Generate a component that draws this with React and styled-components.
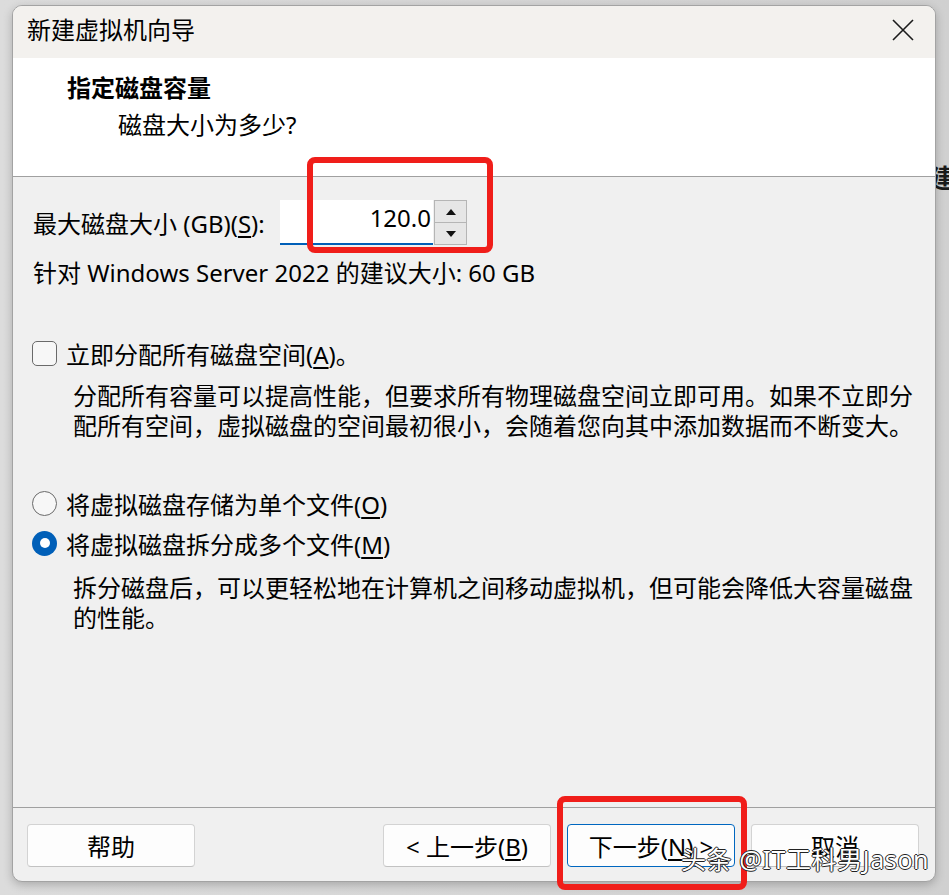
import React from 'react'
import styled, { createGlobalStyle } from 'styled-components'

const GlobalStyle = createGlobalStyle`
  body {
    margin: 0;
    background: #d2d2d2;
    font-family: "Segoe UI", "Noto Sans", "Noto Sans CJK SC", sans-serif;
    color: #000;
  }
`

const Page = styled.div`
  position: relative;
  width: 949px;
  height: 895px;
  overflow: hidden;
  box-sizing: border-box;
  padding: 5px 0 0 12px;
  background: linear-gradient(90deg, #dcdcdc 0%, #d0d0d0 100%);
`

const BackChar = styled.span`
  position: absolute;
  left: 929px;
  top: 158px;
  font-size: 26px;
  font-weight: 700;
  color: #1a1a1a;
  font-family: "Noto Sans CJK SC", sans-serif;
`

const Window = styled.div`
  position: relative;
  width: 924px;
  height: 877px;
  box-sizing: border-box;
  border: 1px solid #a3a3a3;
  border-radius: 10px;
  overflow: hidden;
  display: flex;
  flex-direction: column;
  background: #f0f0f0;
  box-shadow: 0 3px 10px rgba(0, 0, 0, 0.22);
`

const TitleBar = styled.div`
  height: 52px;
  flex: none;
  background: #f3f1ee;
  display: flex;
  align-items: center;
  justify-content: space-between;
  padding: 0 21px 4px 14px;
  box-sizing: border-box;
`

const Title = styled.span`
  font-size: 24px;
  line-height: 32px;
`

const Header = styled.div`
  height: 119px;
  flex: none;
  box-sizing: border-box;
  background: #fff;
  border-bottom: 1px solid #a0a0a0;
  padding: 14px 0 0 54px;
`

const Heading = styled.div`
  font-size: 24px;
  line-height: 32px;
  font-weight: 700;
`

const SubHeading = styled.div`
  font-size: 24px;
  line-height: 32px;
  margin: 5px 0 0 51px;
`

const Body = styled.div`
  flex: 1;
  padding: 23px 0 0 20px;
  font-size: 24px;
`

const SizeRow = styled.div`
  display: flex;
  align-items: center;
  height: 45px;
`

const SizeLabel = styled.span`
  width: 247px;
  flex: none;
  white-space: nowrap;
`

const SizeInput = styled.div`
  width: 153px;
  height: 45px;
  box-sizing: border-box;
  background: #fff;
  border-bottom: 2px solid #005fb8;
  display: flex;
  align-items: center;
  justify-content: flex-end;
  padding: 0 2px 8px 0;
  font-size: 24px;
`

const Spin = styled.div`
  margin-left: 1px;
  width: 33px;
  height: 45px;
  display: flex;
  flex-direction: column;
  border: 1px solid #b5b5b5;
  box-sizing: border-box;
`

const SpinButton = styled.div`
  flex: 1;
  background: #e6e6e6;
  display: flex;
  align-items: center;
  justify-content: center;
  & + & {
    border-top: 1px solid #b5b5b5;
  }
`

const Line = styled.div`
  line-height: 32px;
  margin-top: ${(p) => p.$top || 0}px;
`

const OptionRow = styled.label`
  display: flex;
  align-items: center;
  gap: 9px;
  height: 32px;
  margin: ${(p) => p.$top || 0}px 0 0 -1px;
`

const CheckBox = styled.span`
  width: 25px;
  height: 25px;
  box-sizing: border-box;
  border: 1.5px solid #6a6a6a;
  border-radius: 5px;
  background: #f7f7f7;
`

const Radio = styled.span`
  width: 25px;
  height: 25px;
  box-sizing: border-box;
  border-radius: 50%;
  display: flex;
  align-items: center;
  justify-content: center;
  background: ${(p) => (p.$checked ? '#005fb8' : '#f7f7f7')};
  border: ${(p) => (p.$checked ? 'none' : '1.5px solid #6a6a6a')};
  &::after {
    content: '';
    display: ${(p) => (p.$checked ? 'block' : 'none')};
    width: 10px;
    height: 10px;
    border-radius: 50%;
    background: #fff;
  }
`

const Description = styled.div`
  margin: ${(p) => p.$top}px 0 0 40px;
  line-height: 30px;
  white-space: nowrap;
`

const Key = styled.span`
  text-decoration: underline;
  text-underline-offset: 3px;
`

const Footer = styled.div`
  height: 74px;
  flex: none;
  box-sizing: border-box;
  border-top: 1px solid #a0a0a0;
  display: flex;
  gap: 16px;
  padding: 16px 16px 0 14px;
`

const Button = styled.button`
  width: 168px;
  height: 43px;
  box-sizing: border-box;
  background: #fdfdfd;
  border: 1px solid ${(p) => (p.$primary ? '#0067c0' : '#d3d3d3')};
  border-bottom-color: ${(p) => (p.$primary ? '#0067c0' : '#c2c2c2')};
  border-radius: 4px;
  font-family: inherit;
  font-size: 24px;
  color: #000;
  padding: 0;
  margin-left: ${(p) => (p.$push ? 'auto' : '0')};
`

const Mark = styled.div`
  position: absolute;
  left: ${(p) => p.$x}px;
  top: ${(p) => p.$y}px;
  width: ${(p) => p.$w}px;
  height: ${(p) => p.$h}px;
  box-sizing: border-box;
  border: 6px solid #f01e1a;
  border-radius: 8px;
`

const Watermark = styled.div`
  position: absolute;
  left: 681px;
  top: 843px;
  font-size: 25px;
  line-height: 32px;
  letter-spacing: 0.6px;
  color: #fff;
  font-family: "Noto Sans", "Noto Sans CJK SC", sans-serif;
  text-shadow: 1px 0 0 #222, -1px 0 0 #222, 0 1px 0 #222, 0 -1px 0 #222;
  white-space: nowrap;
`

function CloseIcon() {
  return (
    <svg width="22" height="22" viewBox="0 0 22 22">
      <path d="M1 1 L21 21 M21 1 L1 21" stroke="#1b1b1b" strokeWidth="1.6" fill="none" />
    </svg>
  )
}

function Arrow({ up }) {
  return (
    <svg width="10" height="6" viewBox="0 0 10 6">
      <path d={up ? 'M0 6 L5 0 L10 6 Z' : 'M0 0 L5 6 L10 0 Z'} fill="#111" />
    </svg>
  )
}

export default function App() {
  return (
    <>
      <GlobalStyle />
      <Page>
        <BackChar>建</BackChar>
        <Window>
          <TitleBar>
            <Title>新建虚拟机向导</Title>
            <CloseIcon />
          </TitleBar>
          <Header>
            <Heading>指定磁盘容量</Heading>
            <SubHeading>磁盘大小为多少?</SubHeading>
          </Header>
          <Body>
            <SizeRow>
              <SizeLabel>最大磁盘大小 (GB)(<Key>S</Key>):</SizeLabel>
              <SizeInput>120.0</SizeInput>
              <Spin>
                <SpinButton><Arrow up /></SpinButton>
                <SpinButton><Arrow /></SpinButton>
              </Spin>
            </SizeRow>
            <Line $top={12}>针对 Windows Server 2022 的建议大小: 60 GB</Line>

            <OptionRow $top={48}>
              <CheckBox />
              <span>立即分配所有磁盘空间(<Key>A</Key>)。</span>
            </OptionRow>
            <Description $top={12}>
              分配所有容量可以提高性能，但要求所有物理磁盘空间立即可用。如果不立即分
              <br />
              配所有空间，虚拟磁盘的空间最初很小，会随着您向其中添加数据而不断变大。
            </Description>

            <OptionRow $top={46}>
              <Radio />
              <span>将虚拟磁盘存储为单个文件(<Key>O</Key>)</span>
            </OptionRow>
            <OptionRow $top={8}>
              <Radio $checked />
              <span>将虚拟磁盘拆分成多个文件(<Key>M</Key>)</span>
            </OptionRow>
            <Description $top={14}>
              拆分磁盘后，可以更轻松地在计算机之间移动虚拟机，但可能会降低大容量磁盘
              <br />
              的性能。
            </Description>
          </Body>
          <Footer>
            <Button>帮助</Button>
            <Button $push>&lt; 上一步(<Key>B</Key>)</Button>
            <Button $primary>下一步(<Key>N</Key>) &gt;</Button>
            <Button>取消</Button>
          </Footer>
        </Window>
        <Mark $x={307} $y={157} $w={186} $h={96} />
        <Mark $x={557} $y={796} $w={190} $h={94} />
        <Watermark>头条 @IT工科男Jason</Watermark>
      </Page>
    </>
  )
}
